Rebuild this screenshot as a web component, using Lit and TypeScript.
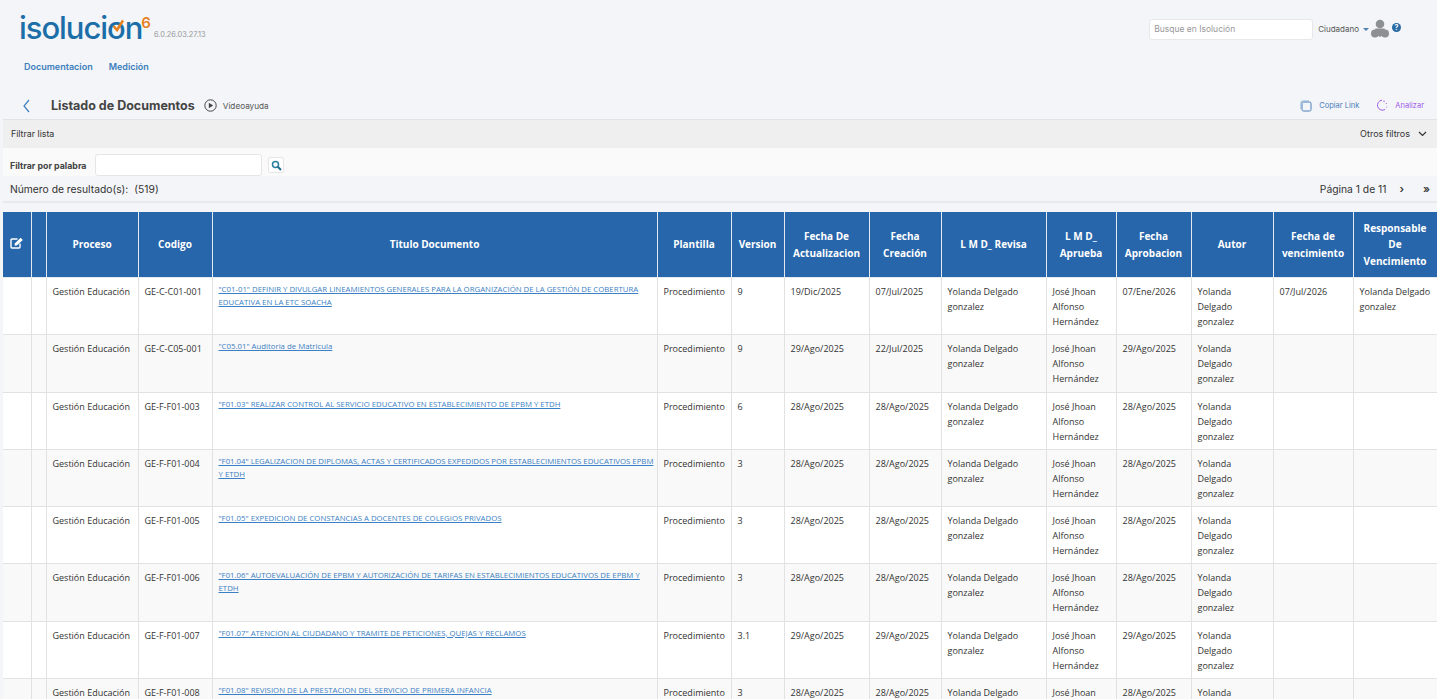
import { LitElement, html, css, svg } from 'lit';
import { customElement } from 'lit/decorators.js';

interface Doc {
  codigo: string;
  titulo: string;
  version: string;
  actualizacion: string;
  creacion: string;
  aprobacion: string;
  vencimiento?: string;
  responsable?: string;
}

const DOCS: Doc[] = [
  {
    codigo: 'GE-C-C01-001',
    titulo: '"C01-01" DEFINIR Y DIVULGAR LINEAMIENTOS GENERALES PARA LA ORGANIZACIÓN DE LA GESTIÓN DE COBERTURA EDUCATIVA EN LA ETC SOACHA',
    version: '9',
    actualizacion: '19/Dic/2025',
    creacion: '07/Jul/2025',
    aprobacion: '07/Ene/2026',
    vencimiento: '07/Jul/2026',
    responsable: 'Yolanda Delgado gonzalez',
  },
  { codigo: 'GE-C-C05-001', titulo: '"C05.01" Auditoria de Matricula', version: '9', actualizacion: '29/Ago/2025', creacion: '22/Jul/2025', aprobacion: '29/Ago/2025' },
  { codigo: 'GE-F-F01-003', titulo: '"F01.03" REALIZAR CONTROL AL SERVICIO EDUCATIVO EN ESTABLECIMIENTO DE EPBM Y ETDH', version: '6', actualizacion: '28/Ago/2025', creacion: '28/Ago/2025', aprobacion: '28/Ago/2025' },
  { codigo: 'GE-F-F01-004', titulo: '"F01.04" LEGALIZACION DE DIPLOMAS, ACTAS Y CERTIFICADOS EXPEDIDOS POR ESTABLECIMIENTOS EDUCATIVOS EPBM Y ETDH', version: '3', actualizacion: '28/Ago/2025', creacion: '28/Ago/2025', aprobacion: '28/Ago/2025' },
  { codigo: 'GE-F-F01-005', titulo: '"F01.05" EXPEDICION DE CONSTANCIAS A DOCENTES DE COLEGIOS PRIVADOS', version: '3', actualizacion: '28/Ago/2025', creacion: '28/Ago/2025', aprobacion: '28/Ago/2025' },
  { codigo: 'GE-F-F01-006', titulo: '"F01.06" AUTOEVALUACIÓN DE EPBM Y AUTORIZACIÓN DE TARIFAS EN ESTABLECIMIENTOS EDUCATIVOS DE EPBM Y ETDH', version: '3', actualizacion: '28/Ago/2025', creacion: '28/Ago/2025', aprobacion: '28/Ago/2025' },
  { codigo: 'GE-F-F01-007', titulo: '"F01.07" ATENCION AL CIUDADANO Y TRAMITE DE PETICIONES, QUEJAS Y RECLAMOS', version: '3.1', actualizacion: '29/Ago/2025', creacion: '29/Ago/2025', aprobacion: '29/Ago/2025' },
  { codigo: 'GE-F-F01-008', titulo: '"F01.08" REVISION DE LA PRESTACION DEL SERVICIO DE PRIMERA INFANCIA', version: '3', actualizacion: '28/Ago/2025', creacion: '28/Ago/2025', aprobacion: '28/Ago/2025' },
];

const editIcon = svg`<svg width="14" height="12" viewBox="0 0 14 12" fill="none">
  <path d="M10 6.5V10a1 1 0 0 1-1 1H2a1 1 0 0 1-1-1V3a1 1 0 0 1 1-1h5.5" stroke="#fff" stroke-width="1.4"/>
  <path d="M5 6.2 10.6 .8l2.2 2.1L7.2 8.3l-2.6.5z" fill="#fff"/>
</svg>`;

@customElement('app-root')
export class AppRoot extends LitElement {
  static styles = css`
    :host {
      display: block;
      height: 100vh;
      overflow: hidden;
      background: #f3f5f8;
      font-family: Inter, 'Liberation Sans', sans-serif;
      color: #333;
    }

    .top {
      display: flex;
      justify-content: space-between;
      height: 58px;
      padding: 0 36px 0 19px;
    }

    .brand {
      display: flex;
      align-items: flex-start;
      padding-top: 9px;
    }

    .logo {
      font-size: 31px;
      line-height: 38px;
      font-weight: 500;
      letter-spacing: -1.05px;
      color: #1b6ea8;
    }

    .logo-o {
      position: relative;
      display: inline-block;
    }

    .logo-o svg {
      position: absolute;
      left: 4px;
      top: 10px;
    }

    .logo-six {
      font-size: 15px;
      line-height: 18px;
      font-weight: 600;
      color: #e8801f;
      margin: 5px 0 0 -1px;
    }

    .build {
      font-size: 7.4px;
      color: #999;
      margin: 21px 0 0 3px;
      line-height: 10px;
    }

    .account {
      display: flex;
      align-items: center;
      height: 20px;
      margin-top: 19px;
    }

    .search {
      box-sizing: border-box;
      width: 164px;
      height: 21px;
      background: #fff;
      border: 1px solid #e6e8eb;
      border-radius: 3px;
      padding-left: 4px;
      font-size: 8.5px;
      line-height: 19px;
      color: #999;
    }

    .user {
      font-size: 8px;
      color: #555;
      margin-left: 5px;
    }

    .caret {
      width: 0;
      height: 0;
      border: 3px solid transparent;
      border-top-color: #4f7fb0;
      margin: 3px 0 0 4px;
    }

    .avatar {
      margin-left: 1px;
    }

    .help {
      width: 9px;
      height: 9px;
      border-radius: 50%;
      background: #2a6aa5;
      color: #fff;
      font-size: 7px;
      font-weight: 700;
      line-height: 9px;
      text-align: center;
      margin: -3px 0 0 2px;
    }

    .nav {
      display: flex;
      gap: 16px;
      height: 30px;
      padding-left: 24px;
      font-size: 9px;
      font-weight: 600;
      line-height: 18px;
      color: #3d7dbd;
    }

    .titlebar {
      display: flex;
      align-items: center;
      box-sizing: border-box;
      height: 31px;
      padding: 4px 13px 0 22px;
    }

    .title {
      font-size: 12.5px;
      font-weight: 700;
      color: #444;
      margin-left: 20px;
    }

    .play {
      margin-left: 9px;
    }

    .video {
      font-size: 8.2px;
      color: #555;
      margin-left: 6px;
    }

    .actions {
      margin-left: auto;
      display: flex;
      align-items: center;
      font-size: 7.5px;
    }

    .copy {
      color: #4a80b8;
      margin-left: 7px;
    }

    .analyze {
      color: #a25ae8;
      margin-left: 7px;
    }

    .analyze-icon {
      margin-left: 16px;
    }

    .panel {
      margin-left: 3px;
    }

    .filter-head {
      display: flex;
      justify-content: space-between;
      align-items: center;
      height: 29px;
      padding: 0 10px 1px 8px;
      background: #efefef;
      border-top: 1px solid #e2e2e2;
      box-sizing: border-box;
      font-size: 8.8px;
      color: #333;
    }

    .others {
      display: flex;
      align-items: center;
      gap: 8px;
      font-size: 9px;
    }

    .filter-row {
      display: flex;
      align-items: center;
      box-sizing: border-box;
      height: 28px;
      padding: 6px 0 0 7px;
      background: #fafafa;
      font-size: 8.8px;
      font-weight: 700;
      color: #444;
    }

    .word {
      box-sizing: border-box;
      width: 167px;
      height: 22px;
      margin-left: 9px;
      background: #fff;
      border: 1px solid #e6e6e6;
      border-radius: 3px;
    }

    .find {
      display: flex;
      align-items: center;
      justify-content: center;
      box-sizing: border-box;
      width: 16px;
      height: 16px;
      margin-left: 6px;
      background: #fff;
      border: 1px solid #e6e6e6;
      border-radius: 2px;
    }

    .results {
      display: flex;
      align-items: center;
      justify-content: space-between;
      box-sizing: border-box;
      height: 27px;
      padding: 0 7px;
      border-bottom: 2px solid #e8e9eb;
      font-size: 10.3px;
      color: #333;
    }

    .results-count {
      margin-left: 6px;
    }

    .pager {
      display: flex;
      align-items: center;
      gap: 13px;
    }

    .pager-arrow {
      font-weight: 600;
      font-size: 11px;
    }

    .pager-last {
      margin-left: 6px;
    }

    .wrap {
      margin: 9px 0 0 3px;
    }

    table {
      width: 1434px;
      table-layout: fixed;
      border-collapse: collapse;
      font-family: 'Open Sans', 'Noto Sans', sans-serif;
    }

    .c1 { width: 28px; }
    .c2 { width: 15px; }
    .c3 { width: 92px; }
    .c4 { width: 74px; }
    .c5 { width: 445px; }
    .c6 { width: 74px; }
    .c7 { width: 53px; }
    .c8 { width: 85px; }
    .c9 { width: 72px; }
    .c10 { width: 105px; }
    .c11 { width: 70px; }
    .c12 { width: 75px; }
    .c13 { width: 82px; }
    .c14 { width: 80px; }
    .c15 { width: 84px; }

    th {
      height: 65px;
      padding: 0 3px;
      background: #2766ab;
      color: #fff;
      border: 1px solid #e3e9f1;
      border-top: none;
      font-size: 10px;
      line-height: 16.6px;
      font-weight: 700;
      text-align: center;
    }

    th:first-child {
      border-left: none;
    }

    th svg {
      display: block;
      margin: -4px auto 0;
    }

    td {
      height: 57.25px;
      box-sizing: border-box;
      padding: 6px 3px 0 6px;
      vertical-align: top;
      border: 1px solid #e2e2e2;
      font-size: 9px;
      line-height: 15px;
      color: #333;
    }

    td:first-child {
      border-left: none;
    }

    tbody tr td {
      background: #fff;
    }

    tbody tr:nth-child(even) td {
      background: #f9f9f9;
    }

    td.doc {
      padding-top: 5px;
      font-size: 7.8px;
      line-height: 13px;
    }

    td.doc a {
      color: #3b7fc4;
      text-decoration: underline;
    }

    td.autor {
      padding-right: 12px;
    }
  `;

  private renderRow(d: Doc) {
    return html`<tr>
      <td></td>
      <td></td>
      <td>Gestión Educación</td>
      <td>${d.codigo}</td>
      <td class="doc"><a>${d.titulo}</a></td>
      <td>Procedimiento</td>
      <td>${d.version}</td>
      <td>${d.actualizacion}</td>
      <td>${d.creacion}</td>
      <td>Yolanda Delgado gonzalez</td>
      <td>José Jhoan Alfonso Hernández</td>
      <td>${d.aprobacion}</td>
      <td class="autor">Yolanda Delgado gonzalez</td>
      <td>${d.vencimiento ?? ''}</td>
      <td>${d.responsable ?? ''}</td>
    </tr>`;
  }

  render() {
    return html`
      <div class="top">
        <div class="brand">
          <span class="logo">isoluci<span class="logo-o">o<svg width="14" height="14" viewBox="0 0 14 14" fill="none">
            <path d="M2.5 7 6 11 12 1.5" stroke="#e8801f" stroke-width="2.6"/>
          </svg></span>n</span>
          <span class="logo-six">6</span>
          <span class="build">6.0.26.03.27.13</span>
        </div>
        <div class="account">
          <div class="search">Busque en Isolución</div>
          <span class="user">Ciudadano</span>
          <span class="caret"></span>
          <svg class="avatar" width="20" height="20" viewBox="0 0 20 20" fill="#8d9092">
            <circle cx="10" cy="5" r="4.3"/>
            <path d="M5.5 9.5h9l1.5 4.5-6 4-6-4z"/>
            <circle cx="5" cy="14.5" r="4"/>
            <circle cx="15" cy="14.5" r="4"/>
          </svg>
          <span class="help">?</span>
        </div>
      </div>
      <div class="nav"><span>Documentacion</span><span>Medición</span></div>
      <div class="titlebar">
        <svg width="9" height="14" viewBox="0 0 9 14" fill="none">
          <path d="M7 1 2 7l5 6" stroke="#3f7fbc" stroke-width="1.2"/>
        </svg>
        <span class="title">Listado de Documentos</span>
        <svg class="play" width="13" height="13" viewBox="0 0 13 13" fill="none">
          <circle cx="6.5" cy="6.5" r="5.7" stroke="#444" stroke-width="1"/>
          <path d="M4.8 3.8v5.4l4.4-2.7z" fill="#444"/>
        </svg>
        <span class="video">Videoayuda</span>
        <div class="actions">
          <svg width="12" height="12" viewBox="0 0 12 12" fill="none">
            <rect x="2" y="2" width="9" height="9" rx="1.5" stroke="#4a80b8" stroke-width="1"/>
            <path d="M1 9V2.5A1.5 1.5 0 0 1 2.5 1H9" stroke="#8fb2d6" stroke-width="1"/>
          </svg>
          <span class="copy">Copiar Link</span>
          <svg class="analyze-icon" width="13" height="13" viewBox="0 0 13 13" fill="none">
            <path d="M7 1.2A5 5 0 1 0 10 10.5" stroke="#a25ae8" stroke-width="1"/>
            <circle cx="9" cy="2.2" r=".7" fill="#a25ae8"/>
            <circle cx="11.3" cy="4.5" r=".6" fill="#a25ae8"/>
            <circle cx="11.7" cy="8" r=".5" fill="#a25ae8"/>
          </svg>
          <span class="analyze">Analizar</span>
        </div>
      </div>
      <div class="panel">
        <div class="filter-head">
          <span>Filtrar lista</span>
          <span class="others">Otros filtros
            <svg width="9" height="6" viewBox="0 0 9 6" fill="none">
              <path d="M1 1l3.5 3.5L8 1" stroke="#333" stroke-width="1.2"/>
            </svg>
          </span>
        </div>
        <div class="filter-row">
          <span>Filtrar por palabra</span>
          <div class="word"></div>
          <div class="find">
            <svg width="11" height="11" viewBox="0 0 11 11" fill="none">
              <circle cx="4.5" cy="4.5" r="3" stroke="#2a7f9e" stroke-width="1.5"/>
              <path d="M6.8 6.8 10 10" stroke="#1f6d8c" stroke-width="2"/>
            </svg>
          </div>
        </div>
        <div class="results">
          <span>Número de resultado(s):<span class="results-count">(519)</span></span>
          <span class="pager">
            <span>Página 1 de 11</span>
            <span class="pager-arrow">›</span>
            <span class="pager-arrow pager-last">»</span>
          </span>
        </div>
      </div>
      <div class="wrap">
        <table>
          <colgroup>
            ${Array.from({ length: 15 }, (_, i) => html`<col class="c${i + 1}" />`)}
          </colgroup>
          <thead>
            <tr>
              <th>${editIcon}</th>
              <th></th>
              <th>Proceso</th>
              <th>Codigo</th>
              <th>Titulo Documento</th>
              <th>Plantilla</th>
              <th>Version</th>
              <th>Fecha De Actualizacion</th>
              <th>Fecha Creación</th>
              <th>L M D_ Revisa</th>
              <th>L M D_ Aprueba</th>
              <th>Fecha Aprobacion</th>
              <th>Autor</th>
              <th>Fecha de vencimiento</th>
              <th>Responsable De Vencimiento</th>
            </tr>
          </thead>
          <tbody>
            ${DOCS.map((d) => this.renderRow(d))}
          </tbody>
        </table>
      </div>
    `;
  }
}

declare global {
  interface HTMLElementTagNameMap {
    'app-root': AppRoot;
  }
}
